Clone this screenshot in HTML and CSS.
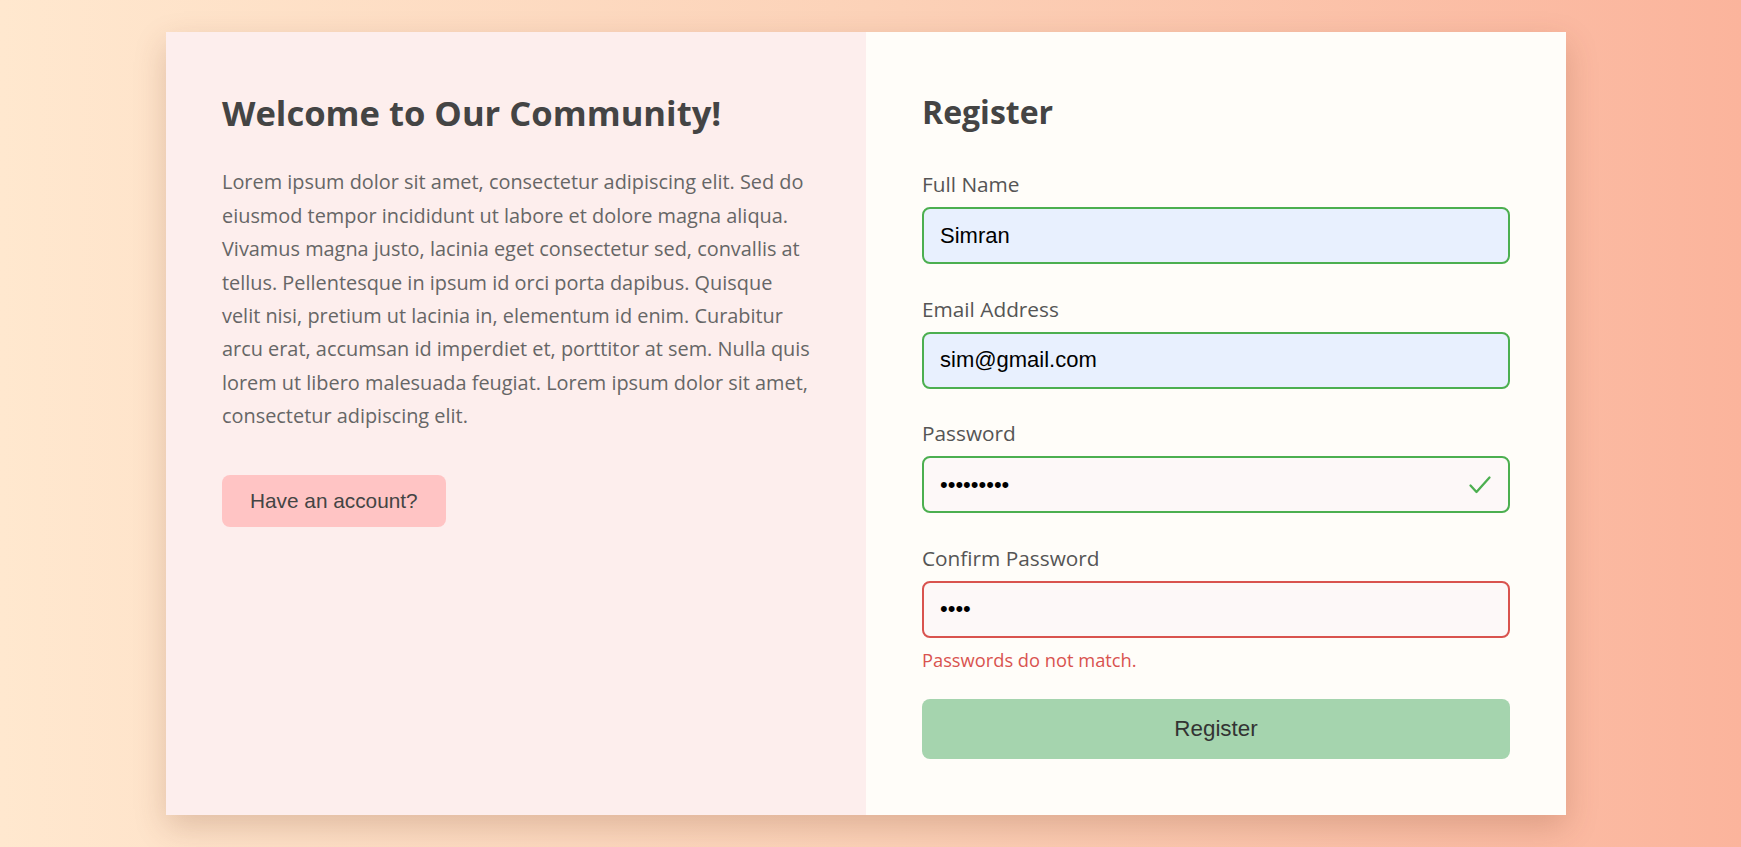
FILE: index.html
```html
<!DOCTYPE html>
<html lang="en">
<head>
<meta charset="utf-8">
<title>Register</title>
<link rel="stylesheet" href="styles.css">
</head>
<body>
<main class="card">
  <section class="intro">
    <h1 class="intro-title">Welcome to Our Community!</h1>
    <p class="intro-text">Lorem ipsum dolor sit amet, consectetur adipiscing elit. Sed do eiusmod tempor incididunt ut labore et dolore magna aliqua. Vivamus magna justo, lacinia eget consectetur sed, convallis at tellus. Pellentesque in ipsum id orci porta dapibus. Quisque velit nisi, pretium ut lacinia in, elementum id enim. Curabitur arcu erat, accumsan id imperdiet et, porttitor at sem. Nulla quis lorem ut libero malesuada feugiat. Lorem ipsum dolor sit amet, consectetur adipiscing elit.</p>
    <button class="account-btn" type="button">Have an account?</button>
  </section>
  <section class="form-panel">
    <h2 class="form-title">Register</h2>
    <form class="form">
      <div class="field">
        <label class="field-label" for="name">Full Name</label>
        <input class="field-input autofilled valid" id="name" type="text" value="Simran">
      </div>
      <div class="field">
        <label class="field-label" for="email">Email Address</label>
        <input class="field-input autofilled valid" id="email" type="email" value="sim@gmail.com">
      </div>
      <div class="field">
        <label class="field-label" for="pass">Password</label>
        <div class="input-wrap">
          <input class="field-input valid" id="pass" type="password" value="123456789">
          <svg class="check" width="24" height="20" viewBox="0 0 24 20" aria-hidden="true"><path d="M2.5 10.5 L8.5 17 L21.5 2.5" fill="none" stroke="#4caf50" stroke-width="2.3" stroke-linecap="round" stroke-linejoin="round"/></svg>
        </div>
      </div>
      <div class="field field-last">
        <label class="field-label" for="confirm">Confirm Password</label>
        <input class="field-input invalid" id="confirm" type="password" value="1234">
        <p class="error">Passwords do not match.</p>
      </div>
      <button class="submit-btn" type="button">Register</button>
    </form>
  </section>
</main>
</body>
</html>
```
FILE: styles.css
```css
* { box-sizing: border-box; }

html, body { height: 100%; }

body {
  margin: 0;
  padding-right: 9px;
  display: flex;
  align-items: center;
  justify-content: center;
  background: linear-gradient(90deg, #ffe8cf 0%, #fcd2b8 50%, #fbb49c 100%);
  font-family: "Open Sans", "Lato", sans-serif;
}

.card {
  width: 1400px;
  display: flex;
  box-shadow: 0 12px 30px rgba(120, 60, 30, 0.22);
}

.intro {
  flex: 1;
  padding: 56px;
  background: #fdeeed;
}

.intro-title {
  margin: 0 0 27px;
  font-size: 34.6px;
  line-height: 50px;
  font-weight: 700;
  color: #444;
}

.intro-text {
  margin: 0 0 42px;
  font-size: 19.9px;
  line-height: 33.4px;
  color: #666;
}

.account-btn {
  border: none;
  border-radius: 8px;
  background: #ffc4c4;
  color: #444;
  font-family: "Liberation Sans", Arial, sans-serif;
  font-size: 20.8px;
  height: 52px;
  padding: 0 28px;
  cursor: pointer;
}

.form-panel {
  flex: 1;
  padding: 56px;
  background: #fffdf9;
}

.form-title {
  margin: 0 0 34px;
  font-size: 32px;
  line-height: 48px;
  font-weight: 700;
  color: #444;
}

.form { display: flex; flex-direction: column; }

.field { margin-bottom: 30.4px; }
.field-last { margin-bottom: 27px; }

.field-label {
  display: block;
  margin-bottom: 9px;
  font-size: 20.8px;
  line-height: 28px;
  color: #555;
}

.input-wrap { position: relative; }

.field-input {
  display: block;
  width: 100%;
  height: 57px;
  padding: 0 16px;
  border: 2px solid #ccc;
  border-radius: 8px;
  background: #fdf8f8;
  font-family: "Liberation Sans", Arial, sans-serif;
  font-size: 22px;
  color: #000;
  outline: none;
}

.field-input.autofilled { background: #e8f0fe; }
.field-input.valid { border-color: #4caf50; }
.field-input.invalid { border-color: #d9534f; }

.check {
  position: absolute;
  right: 18px;
  top: 50%;
  transform: translateY(-50%);
}

.error {
  margin: 10px 0 0;
  font-size: 18.3px;
  line-height: 24px;
  color: #d9534f;
}

.submit-btn {
  height: 60px;
  width: 100%;
  border: none;
  border-radius: 8px;
  background: #a5d4ae;
  color: #333;
  font-family: "Liberation Sans", Arial, sans-serif;
  font-size: 22.4px;
  cursor: pointer;
}
```
